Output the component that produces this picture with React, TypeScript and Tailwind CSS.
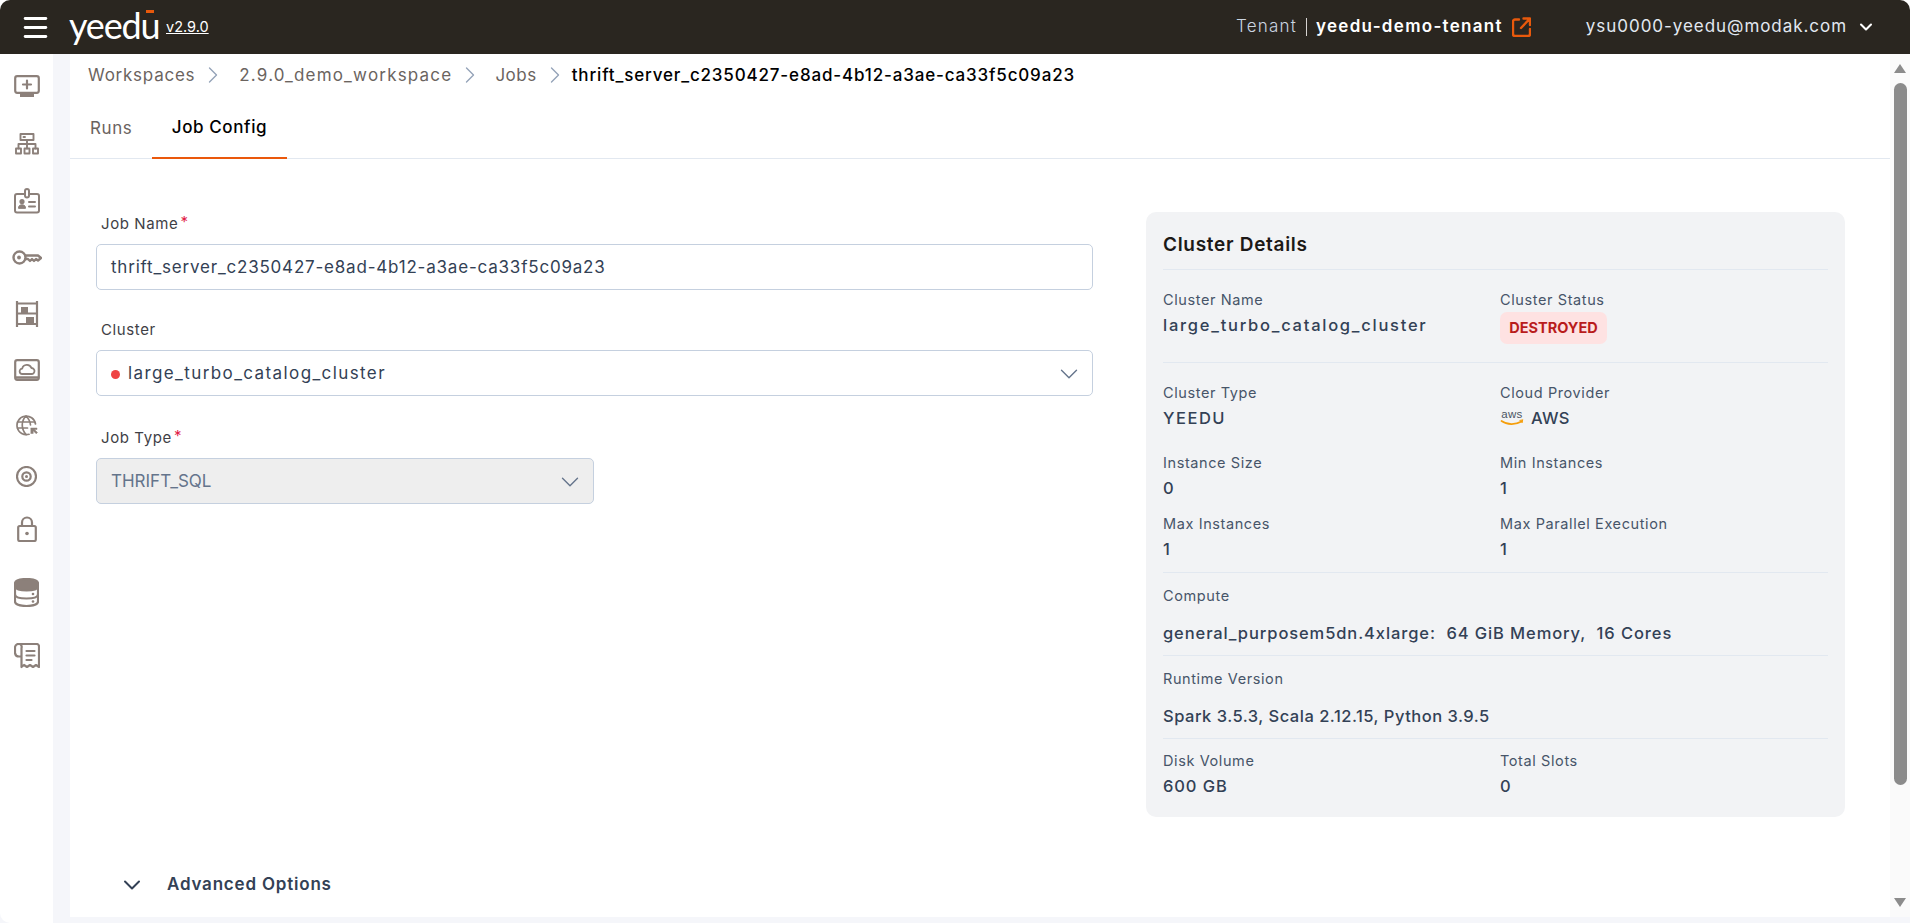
import { ChevronDown, ChevronRight, Menu } from 'lucide-react'

const iconStroke = {
  fill: 'none',
  stroke: 'currentColor',
  strokeWidth: 2.2,
  strokeLinecap: 'round' as const,
  strokeLinejoin: 'round' as const,
}

function MonitorPlus() {
  return (
    <svg width="26" height="23" viewBox="0 0 26 23" {...iconStroke}>
      <rect x="1.2" y="1.2" width="23.6" height="16.6" rx="2" />
      <path d="M13 5.5v8M9 9.5h8" />
      <path d="M6 20.5h14" strokeWidth="3" strokeLinecap="butt" />
    </svg>
  )
}

function Hierarchy() {
  return (
    <svg width="24" height="22" viewBox="0 0 24 22" {...iconStroke} strokeWidth="1.9">
      <rect x="5.5" y="1" width="13" height="6" />
      <path d="M8.5 4h1.5" />
      <path d="M12 7v4M3.5 15.5V11h17v4.500M12 11v4.500" />
      <rect x="1" y="15.5" width="5" height="5" />
      <rect x="9.5" y="15.5" width="5" height="5" />
      <rect x="18" y="15.5" width="5" height="5" />
    </svg>
  )
}

function IdBadge() {
  return (
    <svg width="26" height="26" viewBox="0 0 26 26" {...iconStroke} strokeWidth="2">
      <path d="M10 6H3a2 2 0 0 0-2 2v14.5a2 2 0 0 0 2 2h20a2 2 0 0 0 2-2V8a2 2 0 0 0-2-2h-7" />
      <rect x="11" y="1" width="4" height="8.5" rx="2" />
      <circle cx="8" cy="13.5" r="1.6" fill="currentColor" />
      <path d="M4.500 20c0-2.500 1.500-3.200 3.500-3.200s3.500.7 3.500 3.200z" fill="currentColor" strokeWidth="1" />
      <path d="M15 14h6M15 18.500h6" />
    </svg>
  )
}

function KeyIcon() {
  return (
    <svg width="30" height="15" viewBox="0 0 30 15" {...iconStroke} strokeWidth="2.4">
      <circle cx="7.5" cy="7.5" r="6" />
      <circle cx="7" cy="7.5" r="1.9" fill="currentColor" stroke="none" />
      <path d="M13.500 5.500H26l3 2.500-3 2.500-2-1.500-2 2-2-2-2 2-2-2h-2.500" />
    </svg>
  )
}

function Shelf() {
  return (
    <svg width="24" height="28" viewBox="0 0 24 28" {...iconStroke} strokeLinecap="butt">
      <path d="M2 1v26M22 1v26M2 3.500h20M2 13.500h20M2 24h20" />
      <rect x="6" y="7" width="7" height="6.500" fill="currentColor" stroke="none" />
      <rect x="11" y="17" width="8" height="7" fill="currentColor" stroke="none" />
    </svg>
  )
}

function CloudBox() {
  return (
    <svg width="26" height="22" viewBox="0 0 26 22" {...iconStroke}>
      <rect x="1.2" y="1.2" width="23.6" height="19.6" rx="2" />
      <path d="M8.500 15a2.700 2.700 0 0 1-.3-5.400 4.800 4.800 0 0 1 9.200-.6 3 3 0 0 1 .2 6z" strokeWidth="1.8" />
      <path d="M2 18.500h22" strokeWidth="2.5" strokeLinecap="butt" />
    </svg>
  )
}

function GlobeCursor() {
  return (
    <svg width="22" height="21" viewBox="0 0 22 21" {...iconStroke} strokeWidth="1.7">
      <path d="M13 19.300A9.300 9.300 0 1 1 19.500 9" />
      <path d="M1.500 7h17M1.500 13h10M10 1c-5 5-5 13 0 18.500M10 1c3 3 4.300 6.500 4.500 9" />
      <path d="M15 13h6v1.500h-2.500l3 3-1.300 1.300-3-3V18.500H15z" fill="currentColor" strokeWidth="0.5" />
    </svg>
  )
}

function TargetIcon() {
  return (
    <svg width="21" height="21" viewBox="0 0 21 21" {...iconStroke}>
      <circle cx="10.5" cy="10.5" r="9.5" />
      <circle cx="10.5" cy="10.5" r="4.2" />
      <circle cx="10.5" cy="10.5" r="1.5" fill="currentColor" stroke="none" />
    </svg>
  )
}

function LockIcon() {
  return (
    <svg width="20" height="26" viewBox="0 0 20 26" {...iconStroke}>
      <rect x="1.2" y="10" width="17.6" height="15" rx="1.5" />
      <path d="M5 10V6.500a5 5 0 0 1 10 0V10" />
      <circle cx="10" cy="17.5" r="1.8" fill="currentColor" stroke="none" />
    </svg>
  )
}

function DatabaseIcon() {
  return (
    <svg width="25" height="29" viewBox="0 0 25 29" {...iconStroke}>
      <path d="M1 5.500C1 2.500 6 1 12.500 1S24 2.500 24 5.500v3c0 2.500-5 4-11.500 4S1 11 1 8.500z" fill="currentColor" />
      <path d="M1 8.500v15c0 2.800 5 4.500 11.500 4.500S24 26.300 24 23.500v-15" />
      <path d="M1 16.500c0 2.800 5 4 11.500 4s11.500-1.200 11.500-4" />
      <circle cx="19" cy="16" r="1.3" fill="currentColor" stroke="none" />
      <circle cx="19" cy="23.5" r="1.3" fill="currentColor" stroke="none" />
    </svg>
  )
}

function ReceiptIcon() {
  return (
    <svg width="26" height="26" viewBox="0 0 26 26" {...iconStroke}>
      <path d="M6 1h16.500A2.500 2.500 0 0 1 25 3.500V24l-3-2-3 2-3-2-3 2-3-2-2.500 2V5A3.500 3.500 0 0 0 6 1a4 4 0 0 0-5 3v6a4 4 0 0 0 4 3.500h2.500" />
      <path d="M12.500 8h8M12.500 12.500h8M12.500 17h5" />
    </svg>
  )
}

function ExternalSquare() {
  return (
    <svg width="19" height="20" viewBox="0 0 19 20" fill="none" stroke="#e8590c" strokeWidth="2.4" strokeLinecap="round" strokeLinejoin="round">
      <path d="M7 2.500H3a2 2 0 0 0-2 2V17a2 2 0 0 0 2 2h13a2 2 0 0 0 2-2v-5" />
      <path d="M9 11 17.500 2M11.500 1.500h6.500V8" />
    </svg>
  )
}

function AwsLogo() {
  return (
    <svg width="24" height="20" viewBox="0 0 24 20">
      <text x="12" y="10" textAnchor="middle" fontSize="11.5" fontFamily="'Liberation Sans', sans-serif" fill="#4b5563">aws</text>
      <path d="M1.500 13c5.500 4 14 4 20 .5" fill="none" stroke="#f59e0b" strokeWidth="1.7" strokeLinecap="round" />
      <path d="M19.500 12.500l3-.5-.5 3" fill="none" stroke="#f59e0b" strokeWidth="1.2" />
    </svg>
  )
}

function SideIcon({ children, className }: { children: React.ReactNode; className: string }) {
  return <div className={`flex justify-center ${className}`}>{children}</div>
}

function Sidebar() {
  return (
    <aside className="w-[53px] shrink-0 bg-white rounded-bl-[10px] text-[#8c807a] pt-[21px]">
      <SideIcon className="h-[23px]"><MonitorPlus /></SideIcon>
      <SideIcon className="h-[22px] mt-[35px]"><Hierarchy /></SideIcon>
      <SideIcon className="h-[26px] mt-[33px]"><IdBadge /></SideIcon>
      <SideIcon className="h-[15px] mt-[36px]"><KeyIcon /></SideIcon>
      <SideIcon className="h-[28px] mt-[35px]"><Shelf /></SideIcon>
      <SideIcon className="h-[22px] mt-[31px]"><CloudBox /></SideIcon>
      <SideIcon className="h-[21px] mt-[34px]"><GlobeCursor /></SideIcon>
      <SideIcon className="h-[21px] mt-[30px]"><TargetIcon /></SideIcon>
      <SideIcon className="h-[26px] mt-[29px]"><LockIcon /></SideIcon>
      <SideIcon className="h-[29px] mt-[36px]"><DatabaseIcon /></SideIcon>
      <SideIcon className="h-[26px] mt-[36px]"><ReceiptIcon /></SideIcon>
    </aside>
  )
}

function Header() {
  return (
    <header className="h-[54px] shrink-0 bg-[#2a2620] rounded-t-[10px] flex items-center text-white">
      <Menu className="ml-[20px] w-[31px] h-[33px]" strokeWidth={2.2} />
      <div className="relative ml-[18px] w-[89px] h-[40px] flex items-center">
        <span className="text-[36px] leading-none font-normal tracking-[-1.2px] font-['Lato',sans-serif] pb-[4px]">yeedu</span>
        <div className="absolute left-[77px] top-[3px] w-[8px] h-[3px] bg-[#e8590c]" />
      </div>
      <a className="ml-[8px] text-[14.5px] underline">v2.9.0</a>
      <div className="ml-auto flex items-center">
        <span className="text-[17px] text-[#cbd5e1] font-light tracking-[1.2px]">Tenant</span>
        <div className="w-px h-[18px] bg-[#d6d3d1] mx-[9px]" />
        <span className="text-[17px] font-semibold tracking-[1.3px]">yeedu-demo-tenant</span>
        <span className="ml-[9px] flex"><ExternalSquare /></span>
        <span className="ml-[55px] text-[17px] text-[#e2e8f0] tracking-[0.95px]">ysu0000-yeedu@modak.com</span>
        <ChevronDown className="ml-[9px] mr-[34px] w-[20px] h-[20px]" strokeWidth={2.5} />
      </div>
    </header>
  )
}

function Crumb({ label, className, gap }: { label: string; className: string; gap: string }) {
  return (
    <>
      <span className={`text-[#6b645f] text-[17px] pt-[1px] ${className}`}>{label}</span>
      <ChevronRight className={`w-[28px] h-[28px] text-[#94a3b8] ${gap}`} strokeWidth={1.2} />
    </>
  )
}

function Field({ label, required, children }: { label: string; required?: boolean; children: React.ReactNode }) {
  return (
    <div>
      <div className="h-[20px] pl-[5px] flex items-center text-[15px] tracking-[0.6px] text-[#3f3f46]">
        {label}
        {required && <span className="text-[#e11d48] ml-[2px] -mt-[3px]">*</span>}
      </div>
      <div className="mt-[10px]">{children}</div>
    </div>
  )
}

function Label({ children }: { children: React.ReactNode }) {
  return <div className="h-[20px] flex items-center text-[14.5px] tracking-[0.6px] text-[#475569]">{children}</div>
}

// value text is wider in the original font, so tracking is passed per value
function Detail({ label, children, tracking }: { label: string; children: React.ReactNode; tracking?: string }) {
  return (
    <div>
      <Label>{label}</Label>
      <div className={`h-[20px] mt-[5px] flex items-center text-[16.5px] font-medium text-[#334155] ${tracking ?? ''}`}>{children}</div>
    </div>
  )
}

function WideDetail({ label, value, tracking }: { label: string; value: string; tracking: string }) {
  return (
    <div>
      <Label>{label}</Label>
      <div className={`h-[20px] mt-[17px] flex items-center whitespace-pre text-[16.5px] font-medium text-[#334155] ${tracking}`}>{value}</div>
    </div>
  )
}

function ClusterCard() {
  return (
    <section className="w-[699px] h-[605px] bg-[#f2f3f5] rounded-[10px] px-[17px] pt-[23px] mt-[53px]">
      <h2 className="h-[20px] flex items-center text-[19px] font-semibold tracking-[0.7px] text-[#1c1917]">Cluster Details</h2>
      <hr className="mt-[14px] border-[#e2e8f0]" />
      <div className="grid grid-cols-[337px_1fr] mt-[20px]">
        <Detail label="Cluster Name" tracking="tracking-[1.75px]">large_turbo_catalog_cluster</Detail>
        <div>
          <Label>Cluster Status</Label>
          <span className="mt-[2px] inline-flex items-center justify-center w-[107px] h-[32px] rounded-[7px] bg-[#fee2e2] text-[#b91c1c] text-[14.5px] font-bold">DESTROYED</span>
        </div>
      </div>
      <hr className="mt-[18px] border-[#e2e8f0]" />
      <div className="grid grid-cols-[337px_1fr] mt-[20px]">
        <Detail label="Cluster Type" tracking="tracking-[1.5px]">YEEDU</Detail>
        <Detail label="Cloud Provider" tracking="tracking-[0.3px]">
          <AwsLogo />
          <span className="ml-[7px]">AWS</span>
        </Detail>
      </div>
      <div className="grid grid-cols-[337px_1fr] mt-[25px]">
        <Detail label="Instance Size">0</Detail>
        <Detail label="Min Instances">1</Detail>
      </div>
      <div className="grid grid-cols-[337px_1fr] mt-[16px]">
        <Detail label="Max Instances">1</Detail>
        <Detail label="Max Parallel Execution">1</Detail>
      </div>
      <hr className="mt-[13px] border-[#e2e8f0]" />
      <div className="mt-[13px]">
        <WideDetail label="Compute" value="general_purposem5dn.4xlarge:  64 GiB Memory,  16 Cores" tracking="tracking-[0.9px]" />
      </div>
      <hr className="mt-[12px] border-[#e2e8f0]" />
      <div className="mt-[13px]">
        <WideDetail label="Runtime Version" value="Spark 3.5.3, Scala 2.12.15, Python 3.9.5" tracking="tracking-[0.5px]" />
      </div>
      <hr className="mt-[12px] border-[#e2e8f0]" />
      <div className="grid grid-cols-[337px_1fr] mt-[12px]">
        <Detail label="Disk Volume" tracking="tracking-[0.9px]">600 GB</Detail>
        <Detail label="Total Slots">0</Detail>
      </div>
    </section>
  )
}

export default function App() {
  return (
    <div className="w-[1910px] h-[923px] overflow-hidden flex flex-col bg-white font-['Inter',sans-serif]">
      <Header />
      <div className="flex-1 flex bg-[#f5f6fa] min-h-0">
        <Sidebar />
        <div className="flex-1 ml-[17px] bg-white flex min-w-0 mb-[6px]">
          <main className="flex-1 min-w-0">
            <div className="h-[42px] pl-[18px] flex items-center">
              <Crumb label="Workspaces" className="tracking-[0.75px]" gap="ml-[4px] mr-[12px]" />
              <Crumb label="2.9.0_demo_workspace" className="tracking-[1.2px]" gap="ml-[4px] mr-[11px]" />
              <Crumb label="Jobs" className="tracking-[0.5px]" gap="ml-[4px] mr-[3px]" />
              <span className="text-[17px] pt-[1px] text-black font-medium tracking-[0.84px]">thrift_server_c2350427-e8ad-4b12-a3ae-ca33f5c09a23</span>
            </div>
            <div className="h-[63px] flex border-b border-[#e2e8f0]">
              <div className="w-[82px] pl-[20px] pt-[3px] flex items-center text-[17px] tracking-[0.6px] text-[#6b645f]">Runs</div>
              <div className="w-[135px] h-[63px] pt-[3px] border-b-2 border-[#ea580c] flex items-center justify-center text-[17px] font-medium tracking-[0.6px] text-black">Job Config</div>
            </div>
            <div className="flex pl-[26px]">
              <div className="w-[997px] pt-[55px]">
                <Field label="Job Name" required>
                  <div className="h-[46px] border border-[#c5d0df] rounded-[5px] pl-[14px] pt-[1px] flex items-center text-[17px] tracking-[0.8px] text-[#334155]">
                    thrift_server_c2350427-e8ad-4b12-a3ae-ca33f5c09a23
                  </div>
                </Field>
                <div className="mt-[30px]">
                  <Field label="Cluster">
                    <div className="h-[46px] border border-[#c5d0df] rounded-[5px] pl-[14px] pr-[8px] pt-[2px] flex items-center text-[17px] text-[#334155]">
                      <span className="w-[9px] h-[9px] rounded-full bg-[#ef4444]" />
                      <span className="ml-[8px] tracking-[1.4px]">large_turbo_catalog_cluster</span>
                      <ChevronDown className="ml-auto w-[30px] h-[30px] text-[#64748b]" strokeWidth={1.1} />
                    </div>
                  </Field>
                </div>
                <div className="mt-[32px]">
                  <Field label="Job Type" required>
                    <div className="w-[498px] h-[46px] border border-[#c5d0df] rounded-[5px] bg-[#eeeeee] pl-[14px] pr-[8px] pt-[2px] flex items-center text-[17px] text-[#64748b]">
                      THRIFT_SQL
                      <ChevronDown className="ml-auto w-[30px] h-[30px]" strokeWidth={1.1} />
                    </div>
                  </Field>
                </div>
              </div>
              <div className="ml-[53px]">
                <ClusterCard />
              </div>
            </div>
            <div className="mt-[56px] pl-[48px] flex items-center h-[24px] text-[#334155]">
              <ChevronDown className="w-[28px] h-[28px]" strokeWidth={1.7} />
              <span className="ml-[21px] text-[17px] font-semibold tracking-[0.8px]">Advanced Options</span>
            </div>
          </main>
          <div className="w-[20px] shrink-0 bg-[#fafafa] pt-[10px] flex flex-col items-center">
            <div className="w-0 h-0 border-x-[6px] border-x-transparent border-b-[9px] border-b-[#8b8b8b]" />
            <div className="w-[13px] h-[702px] mt-[10px] rounded-full bg-[#8b8b8b]" />
            <div className="w-0 h-0 mt-[113px] border-x-[6px] border-x-transparent border-t-[9px] border-t-[#8b8b8b]" />
          </div>
        </div>
      </div>
    </div>
  )
}
